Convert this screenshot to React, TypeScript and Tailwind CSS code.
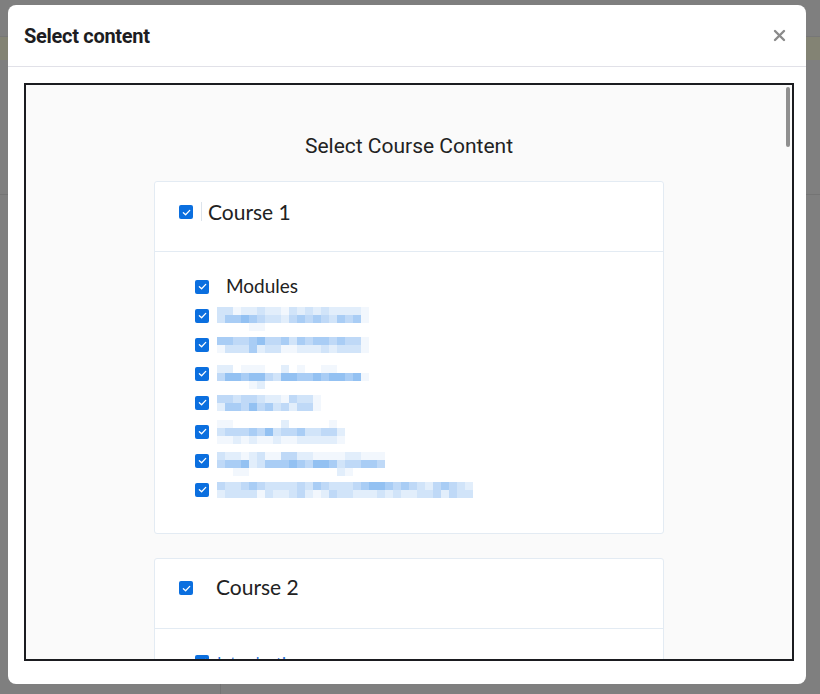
import React from 'react';

// shades used for the blurred (pixelated) item labels
const shades = [
  'bg-transparent',
  'bg-[#f2f7fd]',
  'bg-[#e2eefb]',
  'bg-[#d1e4f9]',
  'bg-[#bfd9f7]',
  'bg-[#a9cdf5]',
  'bg-[#93c1f2]',
];

type BlurItem = { rows: string[]; shift: string };

const course1Items: BlurItem[] = [
  { rows: ['3312232213232322221', '3556543324545435451', '0000110000000000000'], shift: 'translate-y-[3px]' },
  { rows: ['5544564453545545441', '1333523311222323331'], shift: '' },
  { rows: ['2201110020100110000', '4665664366556566561', '0000120000000000000'], shift: 'translate-y-[3px]' },
  { rows: ['4434432214331', '2554645342441'], shift: '' },
  { rows: ['1100000020000010', '3444546344533442', '1121211211222221'], shift: '' },
  { rows: ['322123114422111122111', '455623555654665344554', '001100000000000210000'], shift: 'translate-y-[3px]' },
  { rows: ['43345433334354333456654543245432', '23333132234212433222323223342433'], shift: '' },
];

function Check() {
  return (
    <span className="flex h-[14px] w-[14px] shrink-0 items-center justify-center rounded-[2px] bg-[#0b6fdf]">
      <svg width="9" height="9" viewBox="0 0 10 10" fill="none">
        <path d="M1.5 5.2 L4 7.5 L8.6 2.6" stroke="white" strokeWidth="1.4" strokeLinecap="round" strokeLinejoin="round" />
      </svg>
    </span>
  );
}

function Blurred({ item }: { item: BlurItem }) {
  return (
    <div className={`flex flex-col ${item.shift}`}>
      {item.rows.map((row, r) => (
        <div key={r} className="flex h-[8px]">
          {row.split('').map((d, i) => (
            <span key={i} className={`h-[8px] w-[8px] ${shades[Number(d)]}`} />
          ))}
        </div>
      ))}
    </div>
  );
}

export default function App() {
  return (
    <div className="relative h-[694px] w-full overflow-hidden bg-[#7f7f7f] font-['Lato',sans-serif]">
      {/* page behind the overlay */}
      <div className="absolute left-0 right-0 top-[36px] h-[24px] border-t border-[#777] bg-[#838374]" />
      <div className="absolute left-0 right-0 top-[194px] h-px bg-[#747474]" />
      <div className="absolute bottom-0 left-[220px] top-[660px] w-px bg-[#747474]" />

      {/* modal */}
      <div className="absolute left-[8px] top-[5px] flex h-[679px] w-[798px] flex-col overflow-hidden rounded-[8px] bg-white">
        <div className="flex h-[62px] shrink-0 items-center justify-between border-b border-[#e1e1e8] pl-4 pr-[20px]">
          <h2 className="font-['Roboto',sans-serif] text-[20px] font-bold tracking-[-0.3px] text-[#1d1d22]">Select content</h2>
          <svg width="13" height="13" viewBox="0 0 13 13">
            <path d="M2 2 L11 11 M11 2 L2 11" stroke="#8a8a8a" strokeWidth="2.4" strokeLinecap="round" />
          </svg>
        </div>

        <div className="flex min-h-0 flex-1 pb-[23px] pl-4 pr-3 pt-4">
          <div className="relative min-h-0 flex-1 overflow-hidden border-2 border-[#1b1c20] bg-[#fafafa]">
            <div className="absolute right-[2px] top-[2px] h-[60px] w-[4px] rounded-full bg-[#8f8f8f]" />

            <h1 className="pt-[46px] text-center font-['Roboto',sans-serif] text-[21px] leading-[30px] text-[#222]">
              Select Course Content
            </h1>

            <div className="mx-auto mt-[20px] flex w-[510px] flex-col gap-[24px]">
              {/* course 1 */}
              <div className="rounded-[3px] border border-[#e3ebf3] bg-white">
                <div className="flex h-[69px] items-start pl-[24px] pt-[16px]">
                  <div className="mt-[7px]">
                    <Check />
                  </div>
                  <span className="ml-[8px] mt-[4px] h-[19px] w-px bg-[#dde4ec]" />
                  <span className="ml-[6px] text-[21px] leading-[28px] text-[#222]">Course 1</span>
                </div>
                <div className="border-t border-[#e3ebf3] pb-[29px] pl-[40px] pt-[20px]">
                  <div className="flex h-[29px] items-center">
                    <Check />
                    <span className="ml-[17px] text-[19px] text-[#222]">Modules</span>
                  </div>
                  {course1Items.map((item, i) => (
                    <div key={i} className="flex h-[29px] items-center gap-[8px]">
                      <Check />
                      <Blurred item={item} />
                    </div>
                  ))}
                </div>
              </div>

              {/* course 2 */}
              <div className="rounded-[3px] border border-[#e3ebf3] bg-white">
                <div className="flex h-[69px] items-start pl-[24px] pt-[14px]">
                  <div className="mt-[8px]">
                    <Check />
                  </div>
                  <span className="ml-[23px] text-[21px] leading-[28px] text-[#222]">Course 2</span>
                </div>
                <div className="border-t border-[#e3ebf3] pl-[40px] pt-[18px]">
                  <div className="flex h-[29px] items-center gap-[8px]">
                    <Check />
                    <span className="text-[16px] text-[#1f6fd8]">Introduction</span>
                  </div>
                  <div className="h-[200px]" />
                </div>
              </div>
            </div>
          </div>
        </div>
      </div>
    </div>
  );
}
